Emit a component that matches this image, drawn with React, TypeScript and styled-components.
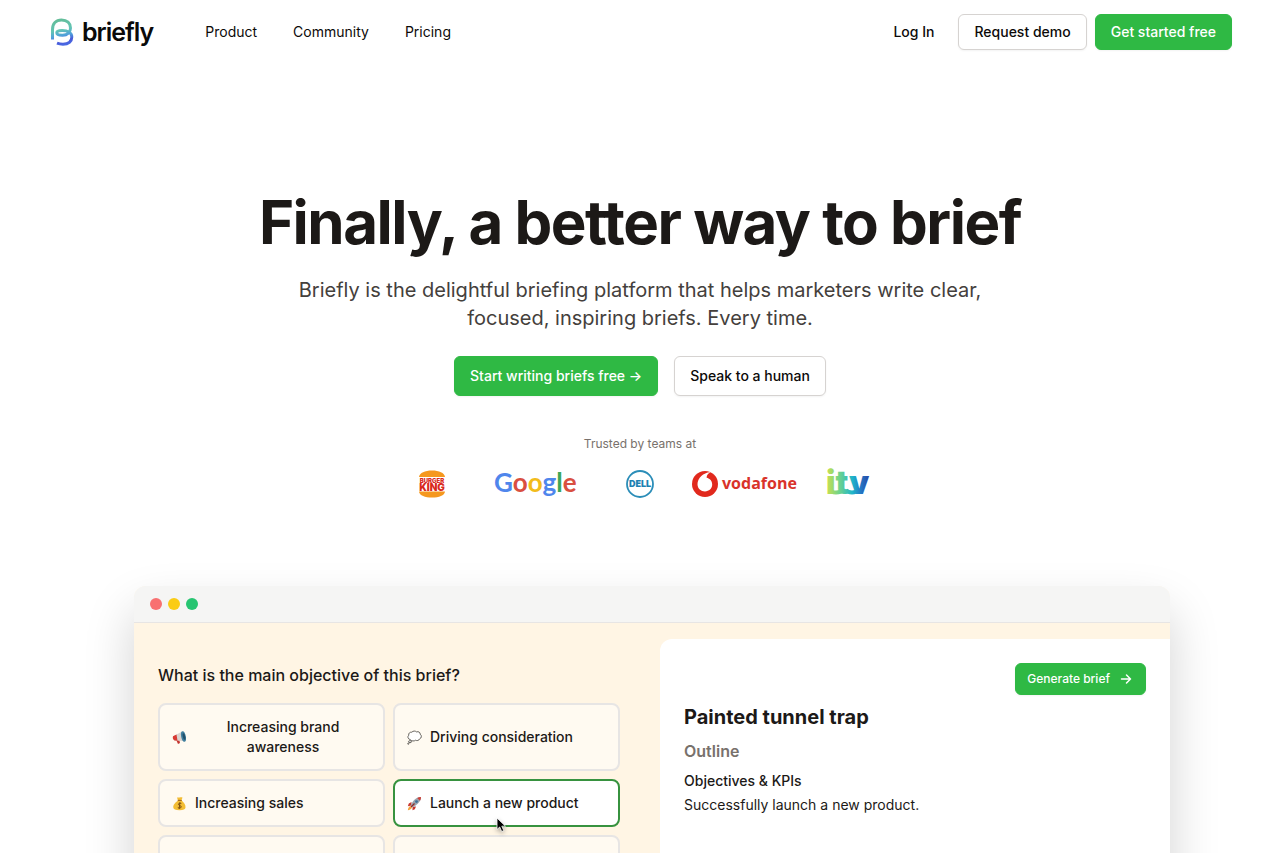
import React from "react";
import styled, { createGlobalStyle } from "styled-components";

const GlobalStyle = createGlobalStyle`
  *, *::before, *::after { box-sizing: border-box; }
  body {
    margin: 0;
    background: #fff;
    color: #1c1917;
    font-family: Inter, "Liberation Sans", sans-serif;
    font-size: 14px;
    line-height: 20px;
    overflow-x: hidden;
    scrollbar-width: none;
  }
  h1, h2, h3, h4, p { margin: 0; }
  a { color: inherit; text-decoration: none; }
`;

const green = "#2fb944";

const Header = styled.header`
  display: flex;
  align-items: center;
  justify-content: space-between;
  padding: 14px 48px;
`;

const HeaderGroup = styled.div<{ $gap: number }>`
  display: flex;
  align-items: center;
  gap: ${(p) => p.$gap}px;
`;

const Brand = styled.a`
  display: flex;
  align-items: center;
  gap: 8px;
  margin-left: 2px;
  color: #0a0a0a;
  font-size: 25px;
  line-height: 32px;
  font-weight: 600;
  letter-spacing: -1px;
`;

const Nav = styled.nav`
  display: flex;
  gap: 36px;
`;

const NavLink = styled.a<{ $strong?: boolean }>`
  color: #0c0a09;
  font-weight: ${(p) => (p.$strong ? 500 : 400)};
`;

const Button = styled.button<{ $primary?: boolean; $size?: "sm" | "md" | "lg" }>`
  display: inline-flex;
  align-items: center;
  justify-content: center;
  gap: 8px;
  height: ${(p) => (p.$size === "sm" ? 32 : p.$size === "lg" ? 40 : 36)}px;
  padding: 0 ${(p) => (p.$size === "sm" ? 11 : 15)}px;
  border: 1px solid ${(p) => (p.$primary ? green : "#d6d3d1")};
  border-radius: 6px;
  background: ${(p) => (p.$primary ? green : "#fff")};
  color: ${(p) => (p.$primary ? "#fff" : "#0c0a09")};
  font-family: inherit;
  font-size: ${(p) => (p.$size === "sm" ? 12 : 14)}px;
  line-height: 20px;
  font-weight: 500;
  white-space: nowrap;
  box-shadow: 0 1px 2px rgba(0, 0, 0, 0.05);
  cursor: pointer;
`;

const Hero = styled.section`
  display: flex;
  flex-direction: column;
  align-items: center;
  padding: 128px 24px 0;
  text-align: center;
`;

const Headline = styled.h1`
  font-size: 60px;
  line-height: 60px;
  font-weight: 700;
  letter-spacing: -0.025em;
`;

const Lead = styled.p`
  max-width: 720px;
  margin-top: 24px;
  color: #44403c;
  font-size: 20px;
  line-height: 28px;
`;

const Actions = styled.div`
  display: flex;
  gap: 16px;
  margin-top: 24px;
`;

const Trusted = styled.p`
  margin-top: 40px;
  color: #78716c;
  font-size: 12px;
  line-height: 16px;
`;

const Logos = styled.ul`
  display: flex;
  align-items: center;
  justify-content: center;
  margin: 16px 0 0;
  padding: 0;
  list-style: none;
`;

const LogoItem = styled.li`
  display: flex;
  justify-content: center;
  width: 104px;

  > svg { flex: none; overflow: visible; }
`;

const Showcase = styled.section`
  padding: 86px 110px 64px 134px;
`;

const Window = styled.div`
  overflow: hidden;
  border-radius: 12px;
  background: #fff5e4;
  box-shadow: 0 25px 50px rgba(0, 0, 0, 0.18);
`;

const TitleBar = styled.div`
  display: flex;
  gap: 6px;
  padding: 12px 16px;
  border-bottom: 1px solid #e7e5e4;
  background: #f5f5f4;
`;

const Dot = styled.span<{ $color: string }>`
  width: 12px;
  height: 12px;
  border-radius: 50%;
  background: ${(p) => p.$color};
`;

const Panels = styled.div`
  display: grid;
  grid-template-columns: minmax(0, 526fr) minmax(0, 510fr);
  padding-top: 16px;
`;

const Questions = styled.div`
  padding: 24px 40px 40px 24px;
`;

const Question = styled.h2`
  font-size: 16px;
  line-height: 24px;
  font-weight: 500;
`;

const Options = styled.div`
  display: grid;
  grid-template-columns: 1fr 1fr;
  gap: 8px;
  margin-top: 16px;
`;

const Option = styled.button<{ $selected?: boolean }>`
  position: relative;
  display: flex;
  align-items: center;
  gap: 8px;
  min-height: 48px;
  padding: 12px;
  border: 2px solid ${(p) => (p.$selected ? "#37923f" : "#e7e5e4")};
  border-radius: 8px;
  background: ${(p) => (p.$selected ? "#fff" : "#fffaf1")};
  color: #1c1917;
  font-family: inherit;
  font-size: 14px;
  line-height: 20px;
  font-weight: 500;
  text-align: center;
  cursor: pointer;

  > svg:first-child { flex: none; }
`;

const Pointer = styled.svg`
  position: absolute;
  left: 100px;
  top: 36px;
  z-index: 1;
  filter: drop-shadow(0 2px 2px rgba(0, 0, 0, 0.3));
`;

const Preview = styled.div`
  display: flex;
  flex-direction: column;
  padding: 24px;
  border-top-left-radius: 12px;
  background: #fff;

  > button { align-self: flex-end; }
`;

const BriefTitle = styled.h2`
  margin-top: 8px;
  font-size: 20px;
  line-height: 28px;
  font-weight: 700;
`;

const OutlineTitle = styled.h3`
  margin-top: 8px;
  color: #78716c;
  font-size: 16px;
  line-height: 24px;
  font-weight: 600;
`;

const FieldTitle = styled.h4`
  margin-top: 8px;
  font-size: 14px;
  line-height: 20px;
  font-weight: 500;
`;

const FieldText = styled.p`
  margin-top: 4px;
`;

const BrieflyMark = () => (
  <svg width="24" height="30" viewBox="0 0 24 30" fill="none" aria-hidden="true">
    <defs>
      <linearGradient id="mark" x1="9" y1="2" x2="15" y2="29" gradientUnits="userSpaceOnUse">
        <stop offset="0" stopColor="#63bd98" />
        <stop offset="0.4" stopColor="#62c4b4" />
        <stop offset="0.62" stopColor="#4f9fdc" />
        <stop offset="0.8" stopColor="#4858d8" />
        <stop offset="1" stopColor="#4a6ee6" />
      </linearGradient>
    </defs>
    <path
      d="M2.500 22.500V12.500C2.500 6.500 6 3 11.500 3C17 3 20.500 6.300 20.500 11C20.500 15 17.500 18.200 12.500 18.200C9 18.200 6.800 17.300 6.800 15.800C6.800 14.200 9.500 13.600 12.200 13.600C18 13.600 21.800 16 21.800 20C21.800 24.500 18.500 27.200 13 27.200C10.500 27.200 8.500 26.800 7 26.200"
      stroke="url(#mark)"
      strokeWidth="3"
    />
  </svg>
);

const BurgerKing = () => (
  <svg width="28" height="28" viewBox="0 0 28 28" role="img" aria-label="Burger King">
    <path d="M1 7C1.500 2.800 7 .5 14 .5S26.500 2.800 27 7Z" fill="#f5981e" />
    <path d="M1 21.500H27C26.500 25.500 21 27.500 14 27.500S1.500 25.500 1 21.500Z" fill="#f5981e" />
    <text x="14" y="12.500" textAnchor="middle" fontFamily="Inter, sans-serif" fontWeight="900" fontSize="6" fill="#d92a1c">BURGER</text>
    <text x="14" y="21" textAnchor="middle" fontFamily="Inter, sans-serif" fontWeight="900" fontSize="10" fill="#d92a1c">KING</text>
  </svg>
);

const Google = () => (
  <svg width="82" height="32" viewBox="0 0 82 32" role="img" aria-label="Google">
    <text x="-1" y="24" fontFamily="Lato, sans-serif" fontWeight="700" fontSize="26">
      <tspan fill="#4f86ec">G</tspan>
      <tspan fill="#d94f41">o</tspan>
      <tspan fill="#f2bc1b">o</tspan>
      <tspan fill="#4f86ec">g</tspan>
      <tspan fill="#3ca757">l</tspan>
      <tspan fill="#d94f41">e</tspan>
    </text>
  </svg>
);

const Dell = () => (
  <svg width="28" height="28" viewBox="0 0 28 28" role="img" aria-label="Dell">
    <circle cx="14" cy="14" r="13" fill="none" stroke="#2b8db8" strokeWidth="1.800" />
    <text x="14" y="17" textAnchor="middle" fontFamily="Inter, sans-serif" fontWeight="900" fontSize="9" fill="#1d81b3">DELL</text>
  </svg>
);

const Vodafone = () => (
  <svg width="104" height="28" viewBox="0 0 104 28" role="img" aria-label="Vodafone">
    <circle cx="13" cy="14" r="13" fill="#e1291d" />
    <path d="M18 2.200C11.500 2.500 5.500 8 5.500 14.300C5.500 18.500 9 21.500 13 21.500C17 21.500 20.200 18.500 20.200 14.600C20.200 11 18 8.600 14.600 7.800C14.600 5.500 16 3.300 18.500 2.600Z" fill="#fff" />
    <text x="30" y="19" fontFamily="'Open Sans', sans-serif" fontWeight="700" fontSize="16" fill="#d9332a">vodafone</text>
  </svg>
);

const Itv = () => (
  <svg width="44" height="24" viewBox="0 0 44 24" role="img" aria-label="ITV">
    <defs>
      <linearGradient id="itv" x1="0" y1="0" x2="44" y2="0" gradientUnits="userSpaceOnUse">
        <stop offset="0" stopColor="#cfe04a" />
        <stop offset="0.3" stopColor="#6fd38c" />
        <stop offset="0.6" stopColor="#1fb5c9" />
        <stop offset="0.8" stopColor="#2377c4" />
        <stop offset="1" stopColor="#2b3fa0" />
      </linearGradient>
    </defs>
    <path d="M4 17Q5 20.500 10 20.500T17 18M20 18Q22 20.500 26 20.500T34 17" fill="none" stroke="url(#itv)" strokeWidth="4" />
    <text x="0" y="22" fontFamily="Inter, sans-serif" fontWeight="900" fontSize="32" fill="url(#itv)">itv</text>
  </svg>
);

const Megaphone = () => (
  <svg width="15" height="15" viewBox="0 0 15 15" aria-hidden="true">
    <path d="M1 6.500L10 1.500L12 11L2.500 10.500Z" fill="#d9d3cf" />
    <path d="M1 6.200L4.500 4.500L5.500 10.800L2.500 10.500C1 10 .4 7.500 1 6.200Z" fill="#d83a34" />
    <path d="M4.500 10.500L7.500 10.700L8 13L6 14Z" fill="#c43530" />
    <ellipse cx="11.500" cy="6.500" rx="2.300" ry="5.300" transform="rotate(-12 11.500 6.500)" fill="#3f7e9e" />
    <ellipse cx="12" cy="6.500" rx="1.200" ry="3.400" transform="rotate(-12 12 6.500)" fill="#24506a" />
  </svg>
);

const Thought = () => (
  <svg width="15" height="15" viewBox="0 0 15 15" fill="#fff" stroke="#57534e" strokeWidth="0.900" aria-hidden="true">
    <path d="M3 9.500C.8 9 .3 6.500 1.700 5.300C1.300 3.200 3.200 1.800 4.800 2.200C6 .7 8.500 .8 9.500 1.900C11.500 1.200 13.300 2.300 13.200 4.200C15 5.500 14.600 8.200 12.700 8.800C12 10.600 9.800 11 8.600 10.200C7.300 11.400 4.500 11.200 3 9.500Z" />
    <ellipse cx="3" cy="11.700" rx="1.500" ry="1" />
    <circle cx="1.300" cy="13.700" r="0.600" />
  </svg>
);

const MoneyBag = () => (
  <svg width="15" height="15" viewBox="0 0 15 15" aria-hidden="true">
    <path d="M6 4.500L5 1.500C6.500 2 8 .5 10.500 1.500L9.500 4.500C12 6 13.800 9 13.500 11.500C13.300 13.500 11.500 14.200 7.500 14.200S1.500 13.500 1.300 11.500C1 9 3.500 6 6 4.500Z" fill="#f3bd35" />
    <path d="M5.800 4.300L9.800 4.500" stroke="#a86b1a" strokeWidth="1.200" />
    <path d="M9.300 7.500C7.500 6.600 6 7.500 6.500 8.700C7 9.900 9.300 9.400 9.300 10.900C9.200 12.200 7 12.400 5.800 11.500M7.900 6.300L7.200 13" fill="none" stroke="#7c4f12" strokeWidth="1" />
  </svg>
);

const Rocket = () => (
  <svg width="15" height="15" viewBox="0 0 15 15" aria-hidden="true">
    <path d="M4.500 6L1.800 7.500L.8 10.200L4.500 9.500ZM9 10.500L7.800 13.300L5.500 14.200L5.600 10.800Z" fill="#c9372f" />
    <path d="M3.200 10C1.800 10.800 1 12.500 .8 14.200C2.500 14 4 13.200 5 11.800Z" fill="#f2a13b" />
    <path d="M14 1C10 1 6.500 3.500 3.700 9.300L5.700 11.300C11 8.500 14 5 14 1Z" fill="#9aa3ad" />
    <path d="M14 1C12.500 1 11.300 1.400 10.200 2L13 4.800C13.600 3.700 14 2.500 14 1Z" fill="#cf3f36" />
    <circle cx="9.500" cy="5.600" r="1.400" fill="#3b6f97" />
    <path d="M4 11L7.500 7.500" stroke="#8d2b27" strokeWidth="1.200" />
  </svg>
);

const ArrowRight = () => (
  <svg width="16" height="16" viewBox="0 0 16 16" fill="none" stroke="currentColor" strokeWidth="1.500" strokeLinecap="round" strokeLinejoin="round" aria-hidden="true">
    <path d="M3.500 8H12.500M8.500 4L12.500 8L8.500 12" />
  </svg>
);

const options = [
  { label: "Increasing brand awareness", icon: <Megaphone /> },
  { label: "Driving consideration", icon: <Thought /> },
  { label: "Increasing sales", icon: <MoneyBag /> },
  { label: "Launch a new product", icon: <Rocket />, selected: true },
];

export default function App() {
  return (
    <>
      <GlobalStyle />
      <Header>
        <HeaderGroup $gap={52}>
          <Brand href="#">
            <BrieflyMark />
            briefly
          </Brand>
          <Nav>
            <NavLink href="#product">Product</NavLink>
            <NavLink href="#community">Community</NavLink>
            <NavLink href="#pricing">Pricing</NavLink>
          </Nav>
        </HeaderGroup>
        <HeaderGroup $gap={24}>
          <NavLink href="#login" $strong>Log In</NavLink>
          <HeaderGroup $gap={8}>
            <Button>Request demo</Button>
            <Button $primary>Get started free</Button>
          </HeaderGroup>
        </HeaderGroup>
      </Header>
      <main>
        <Hero>
          <Headline>Finally, a better way to brief</Headline>
          <Lead>
            Briefly is the delightful briefing platform that helps marketers write clear, focused,
            inspiring briefs. Every time.
          </Lead>
          <Actions>
            <Button $primary $size="lg">Start writing briefs free →</Button>
            <Button $size="lg">Speak to a human</Button>
          </Actions>
          <Trusted>Trusted by teams at</Trusted>
          <Logos>
            <LogoItem><BurgerKing /></LogoItem>
            <LogoItem><Google /></LogoItem>
            <LogoItem><Dell /></LogoItem>
            <LogoItem><Vodafone /></LogoItem>
            <LogoItem><Itv /></LogoItem>
          </Logos>
        </Hero>
        <Showcase>
          <Window>
            <TitleBar>
              <Dot $color="#f87171" />
              <Dot $color="#facc15" />
              <Dot $color="#27c571" />
            </TitleBar>
            <Panels>
              <Questions>
                <Question>What is the main objective of this brief?</Question>
                <Options>
                  {options.map((o) => (
                    <Option key={o.label} type="button" $selected={o.selected}>
                      {o.icon}
                      <span>{o.label}</span>
                      {o.selected && (
                        <Pointer width="12" height="16" viewBox="0 0 12 16" aria-hidden="true">
                          <path d="M2 1V12.500L4.700 10L6.700 14.500L8.800 13.600L6.800 9.200H10.500Z" fill="#000" stroke="#fff" strokeWidth="0.800" />
                        </Pointer>
                      )}
                    </Option>
                  ))}
                  <Option type="button" aria-label="More objectives" />
                  <Option type="button" aria-label="Other objective" />
                </Options>
              </Questions>
              <Preview>
                <Button $primary $size="sm">
                  Generate brief <ArrowRight />
                </Button>
                <BriefTitle>Painted tunnel trap</BriefTitle>
                <OutlineTitle>Outline</OutlineTitle>
                <FieldTitle>Objectives &amp; KPIs</FieldTitle>
                <FieldText>Successfully launch a new product.</FieldText>
              </Preview>
            </Panels>
          </Window>
        </Showcase>
      </main>
    </>
  );
}
